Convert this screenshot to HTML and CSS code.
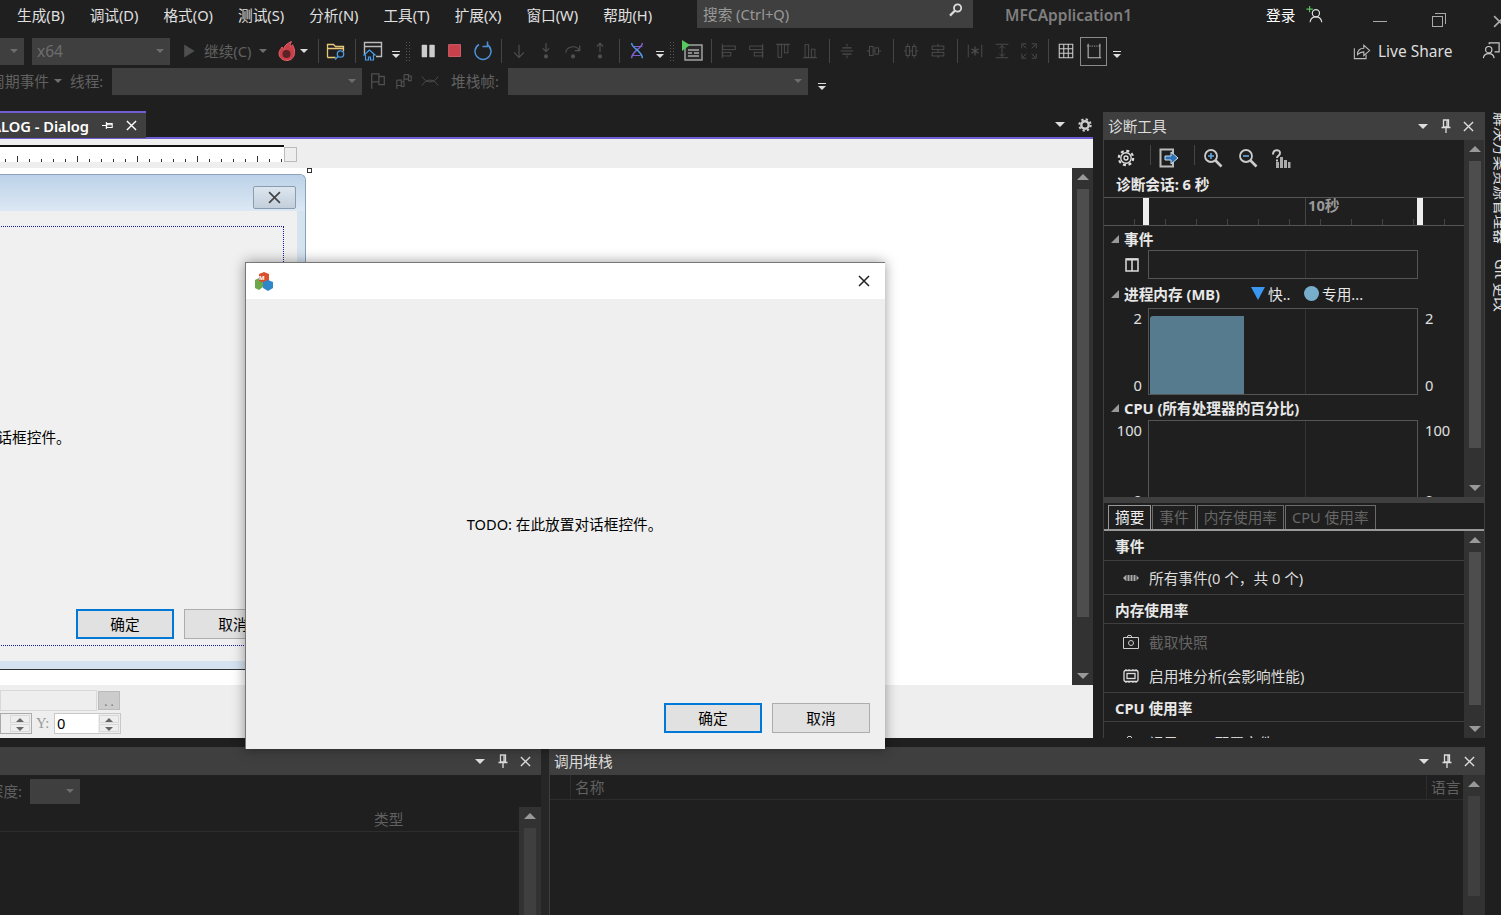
FILE: index.html
```html
<!DOCTYPE html>
<html lang="zh-CN">
<head>
  <meta charset="UTF-8">
  <title>MFCApplication1 - Visual Studio</title>
  <link rel="stylesheet" href="styles.css">
</head>
<body>
  <svg class="defs" aria-hidden="true">
    <symbol id="i-play" viewBox="0 0 20 20"><path d="M4 2l13 8-13 8z" fill="currentColor"/></symbol>
    <symbol id="i-flame" viewBox="0 0 20 20"><path d="M10 19.500c-5 0-8-3.400-8-7 0-3 2-4.500 3-6.500.5 1.200 1 1.800 1.800 2.300C7 5 10 2.500 14.500 .5 13 3 13 4.500 13.500 6c1-.5 1.500-1.200 2-2.300 1.500 3 2.500 5.500 2 8.800-.5 4-3.500 7-7.500 7z" fill="#c8404a" stroke="#e8606a"/><circle cx="9.500" cy="13" r="4" fill="#5c2226"/></symbol>
    <symbol id="i-folder" viewBox="0 0 20 20"><path d="M1.500 16.500v-13h6l2 2h8v5M1.500 16.500h8M1.500 7.500h16" fill="none" stroke="#e8c878" stroke-width="1.300"/><circle cx="14.500" cy="13" r="3.200" fill="#1f1f1f" stroke="#4a9ce8" stroke-width="1.300"/><path d="M12 15.500l-3 3" stroke="#4a9ce8" stroke-width="1.500"/></symbol>
    <symbol id="i-home" viewBox="0 0 20 20"><path d="M1.500 13V1.500h17v14H13M1.500 5.500h17" fill="none" stroke="#bbb" stroke-width="1.400"/><path d="M6.500 9L1 14h1.500v5h3v-3h2v3h3v-5H12z" fill="#1f1f1f" stroke="#4a9ce8" stroke-width="1.200"/></symbol>
    <symbol id="i-pause" viewBox="0 0 20 20"><rect x="3" y="3" width="6" height="14" rx="1" fill="#ccc"/><rect x="11.500" y="3" width="6" height="14" rx="1" fill="#ccc"/></symbol>
    <symbol id="i-stop" viewBox="0 0 20 20"><rect x="3" y="3" width="13" height="13" fill="#c8404a" stroke="#e06570"/></symbol>
    <symbol id="i-restart" viewBox="0 0 20 20"><path d="M7 3.500A8 8 0 1 0 15 3.500" fill="none" stroke="#4a90d8" stroke-width="1.500"/><path d="M15.500 .5v5h-5" fill="none" stroke="#4a90d8" stroke-width="1.500"/></symbol>
    <symbol id="i-down" viewBox="0 0 20 20"><path d="M10 3v14M4.500 11.500L10 17l5.500-5.500" fill="none" stroke="currentColor" stroke-width="1.300"/></symbol>
    <symbol id="i-into" viewBox="0 0 20 20"><path d="M10 1v9M6.500 7L10 10.500 13.500 7" fill="none" stroke="currentColor" stroke-width="1.300"/><circle cx="10" cy="16" r="2.300" fill="currentColor"/></symbol>
    <symbol id="i-over" viewBox="0 0 20 20"><path d="M2 12a8 7 0 0 1 15-3M17.500 4v5.500H12" fill="none" stroke="currentColor" stroke-width="1.300"/><circle cx="10" cy="16" r="2.300" fill="currentColor"/></symbol>
    <symbol id="i-out" viewBox="0 0 20 20"><path d="M10 11V1.500M6.500 5L10 1.500 13.500 5" fill="none" stroke="currentColor" stroke-width="1.300"/><circle cx="10" cy="16" r="2.300" fill="currentColor"/></symbol>
    <symbol id="i-dna" viewBox="0 0 20 20"><path d="M16 1C16 7 4 10 4 18" fill="none" stroke="#8060d0" stroke-width="1.600"/><path d="M4 1c0 6 12 9 12 17" fill="none" stroke="#4a9ce8" stroke-width="1.600"/><path d="M6 5h10M5 15h9" stroke="#8060d0" stroke-width="1.300"/></symbol>
    <symbol id="i-run" viewBox="0 0 22 22"><rect x="4" y="5" width="17" height="15" fill="#2a2a2a" stroke="#aaa" stroke-width="1.400"/><path d="M7 10h11M7 13h4M13 13h5M7 16h11" stroke="#aaa" stroke-width="1.300"/><path d="M1 0l8 5-8 6z" fill="#58c860"/></symbol>
    <symbol id="i-al1" viewBox="0 0 20 20"><path d="M2.500 2v16" stroke="currentColor"/><rect x="3" y="4.500" width="14" height="4" fill="none" stroke="currentColor"/><rect x="3" y="11.500" width="9" height="4" fill="none" stroke="currentColor"/></symbol>
    <symbol id="i-al2" viewBox="0 0 20 20"><path d="M17.500 2v16" stroke="currentColor"/><rect x="3" y="4.500" width="14" height="4" fill="none" stroke="currentColor"/><rect x="8" y="11.500" width="9" height="4" fill="none" stroke="currentColor"/></symbol>
    <symbol id="i-al3" viewBox="0 0 20 20"><path d="M2 2.500h16" stroke="currentColor"/><rect x="4.500" y="3" width="4" height="14" fill="none" stroke="currentColor"/><rect x="11.500" y="3" width="4" height="9" fill="none" stroke="currentColor"/></symbol>
    <symbol id="i-al4" viewBox="0 0 20 20"><path d="M2 17.500h16" stroke="currentColor"/><rect x="4.500" y="3" width="4" height="14" fill="none" stroke="currentColor"/><rect x="11.500" y="8" width="4" height="9" fill="none" stroke="currentColor"/></symbol>
    <symbol id="i-ce1" viewBox="0 0 20 20"><path d="M3 10h14M10 2v3M10 15v3" stroke="currentColor"/><path d="M5 6.500h10M5 13.500h10" stroke="currentColor" stroke-width="1.500"/></symbol>
    <symbol id="i-ce2" viewBox="0 0 20 20"><path d="M2 10h16" stroke="currentColor"/><rect x="5" y="5" width="4" height="10" fill="#1f1f1f" stroke="currentColor"/><rect x="11" y="6.500" width="4" height="7" fill="#1f1f1f" stroke="currentColor"/></symbol>
    <symbol id="i-sp1" viewBox="0 0 20 20"><path d="M6.500 2v16M13.500 2v16M2 10h16" stroke="currentColor"/><rect x="4.500" y="5" width="4" height="10" fill="#1f1f1f" stroke="currentColor"/><rect x="11.500" y="5" width="4" height="10" fill="#1f1f1f" stroke="currentColor"/></symbol>
    <symbol id="i-sp2" viewBox="0 0 20 20"><path d="M10 2v16" stroke="currentColor"/><rect x="3.500" y="4.500" width="13" height="4" fill="#1f1f1f" stroke="currentColor"/><rect x="3.500" y="11.500" width="13" height="4" fill="#1f1f1f" stroke="currentColor"/></symbol>
    <symbol id="i-tab" viewBox="0 0 20 20"><path d="M2.500 3v14M17.500 3v14" stroke="currentColor"/><path d="M10 5v10M6 7.500l8 5M14 7.500l-8 5" stroke="currentColor" stroke-width="1.300"/></symbol>
    <symbol id="i-hei" viewBox="0 0 20 20"><path d="M3 2.500h14M3 17.500h14M10 4v12M7 7l3-3 3 3M7 13l3 3 3-3" fill="none" stroke="currentColor"/></symbol>
    <symbol id="i-siz" viewBox="0 0 20 20"><path d="M2 7V2h5M13 2h5v5M2 13v5h5M18 13v5h-5M3 3l4 4M17 3l-4 4M3 17l4-4M17 17l-4-4" fill="none" stroke="currentColor"/></symbol>
    <symbol id="i-grid" viewBox="0 0 20 20"><path d="M2.500 2.500h15v15h-15zM7.500 2.500v15M12.500 2.500v15M2.500 7.500h15M2.500 12.500h15" fill="none" stroke="#ccc" stroke-width="1.200"/></symbol>
    <symbol id="i-guide" viewBox="0 0 20 20"><path d="M3.500 2v15.500H18M16.500 2v15.500" fill="none" stroke="#bbb" stroke-width="1.200"/><path d="M2 4.500h15" stroke="#bbb" stroke-dasharray="1 1"/></symbol>
    <symbol id="i-flag" viewBox="0 0 20 20"><path d="M3 1.500v17M3 2h8v9H3M11 5h6v9h-6z" fill="none" stroke="currentColor" stroke-width="1.400"/></symbol>
    <symbol id="i-flags" viewBox="0 0 20 20"><path d="M2 9v10M2 9h5v6H2M7 11h3v5H7zM10 3v7M10 3h5v5h-5M15 4.500h3v5h-3z" fill="none" stroke="currentColor" stroke-width="1.300"/></symbol>
    <symbol id="i-thread" viewBox="0 0 20 20"><path d="M1 5c5 8 13 8 18 0M1 15c5-8 13-8 18 0" fill="none" stroke="currentColor"/></symbol>
    <symbol id="i-search" viewBox="0 0 20 20"><circle cx="12" cy="7.500" r="4.500" fill="none" stroke="#ddd" stroke-width="2.200"/><path d="M8.500 11l-6 6" stroke="#ddd" stroke-width="2.800"/></symbol>
    <symbol id="i-user" viewBox="0 0 20 20"><circle cx="11" cy="8" r="4" fill="none" stroke="#ddd" stroke-width="1.300"/><path d="M4.500 18c.5-4 3-6 6.500-6s6 2 6.500 6" fill="none" stroke="#ddd" stroke-width="1.300"/><path d="M4 0v7M.5 3.500h7" stroke="#58c860" stroke-width="1.200"/></symbol>
    <symbol id="i-share" viewBox="0 0 20 20"><path d="M1.500 7v11.500h13V14" fill="none" stroke="#bbb" stroke-width="1.200"/><path d="M5 14c0-5 3-7 7-7V3.500l6.500 6-6.500 5.500v-4c-3 0-5 1-7 3z" fill="none" stroke="#bbb" stroke-width="1.200"/></symbol>
    <symbol id="i-feedback" viewBox="0 0 20 20"><circle cx="7.500" cy="8.500" r="3.500" fill="none" stroke="#ccc" stroke-width="1.300"/><path d="M1.500 18c.5-3.500 3-5 6-5s5.500 1.500 6 5M8 2.500V1h11v10h-5" fill="none" stroke="#ccc" stroke-width="1.300"/></symbol>
    <symbol id="i-pin" viewBox="0 0 12 14"><path d="M3.500 1h5v7h-5zM1.500 8.500h9M6 9v5M7 1.500v6" fill="none" stroke="currentColor" stroke-width="1.300"/></symbol>
    <symbol id="i-pinh" viewBox="0 0 14 12"><path d="M13 3.500v5H6v-5zM5.500 1.500v9M5 6H0M12.500 5H6.500" fill="none" stroke="currentColor" stroke-width="1.300"/></symbol>
    <symbol id="i-x" viewBox="0 0 12 12"><path d="M1 1l10 10M11 1L1 11" stroke="currentColor" stroke-width="1.500"/></symbol>
    <symbol id="i-gear" viewBox="0 0 20 20"><circle cx="10" cy="10" r="5.800" fill="none" stroke="currentColor" stroke-width="1.500"/><circle cx="10" cy="10" r="2.200" fill="none" stroke="currentColor" stroke-width="1.500"/><circle cx="10" cy="10" r="8" fill="none" stroke="currentColor" stroke-width="2.400" stroke-dasharray="3.300 3"/></symbol>
    <symbol id="i-gearf" viewBox="0 0 14 14"><circle cx="7" cy="7" r="3.700" fill="none" stroke="currentColor" stroke-width="2.400"/><circle cx="7" cy="7" r="5.700" fill="none" stroke="currentColor" stroke-width="2" stroke-dasharray="2.300 2.170"/></symbol>
    <symbol id="i-export" viewBox="0 0 20 20"><path d="M14 6V1.500H1.500v17H14V14" fill="none" stroke="#bbb" stroke-width="2"/><path d="M6 8h6V4l7 6-7 6v-4H6z" fill="#2f72b8" stroke="#cfdde8"/></symbol>
    <symbol id="i-zin" viewBox="0 0 20 20"><circle cx="8" cy="8" r="6" fill="#1f1f1f" stroke="#ccc" stroke-width="1.800"/><path d="M5 8h6M8 5v6" stroke="#6aa8e0" stroke-width="1.600"/><path d="M12.500 12.500l6 6" stroke="#ccc" stroke-width="2.600"/></symbol>
    <symbol id="i-zout" viewBox="0 0 20 20"><circle cx="8" cy="8" r="6" fill="#1f1f1f" stroke="#ccc" stroke-width="1.800"/><path d="M5 8h6" stroke="#6aa8e0" stroke-width="1.600"/><path d="M12.500 12.500l6 6" stroke="#ccc" stroke-width="2.600"/></symbol>
    <symbol id="i-chart" viewBox="0 0 20 20"><path d="M2 6.500C2 1 9 1 9 5c0 3-3 2.500-3 5M6 11.500v2" fill="none" stroke="#ccc" stroke-width="2"/><path d="M5 14h3v6H5zM9 9h3v11H9zM13 12h3v8h-3zM17 14h2.500v6H17z" fill="#aaa"/></symbol>
    <symbol id="i-cols" viewBox="0 0 14 14"><path d="M1 1h12v12H1zM7 1v12" fill="none" stroke="#ddd" stroke-width="1.500"/><path d="M1.500 1.500h11" stroke="#ddd" stroke-width="2"/></symbol>
    <symbol id="i-events" viewBox="0 0 16 8"><path d="M0 4l3-3h10l3 3-3 3H3z" fill="#aaa"/><path d="M4 1v6M7 1v6M10 1v6M13 1v6" stroke="#1f1f1f"/></symbol>
    <symbol id="i-camera" viewBox="0 0 16 14"><path d="M.5 2.500h15v11H.5z" fill="none" stroke="#ccc"/><path d="M4 2.500l1-2h3l1 2" fill="none" stroke="#ccc"/><circle cx="8" cy="8" r="2.500" fill="none" stroke="#ccc"/></symbol>
    <symbol id="i-chip" viewBox="0 0 16 14"><rect x="1" y="1.500" width="14" height="11" rx="1.500" fill="none" stroke="#ddd" stroke-width="1.300"/><rect x="4" y="4.500" width="8" height="5" fill="none" stroke="#ddd" stroke-width="1.300"/><path d="M3 0v2M6 0v2M10 0v2M13 0v2M3 12v2M6 12v2M10 12v2M13 12v2" stroke="#ddd"/></symbol>
    <symbol id="i-mfc" viewBox="0 0 20 20"><path d="M1 9l4-2 4 2v7l-4 3-4-2z" fill="#6aa84a"/><path d="M5 3l5-2 5 2v7l-5 2-5-2z" fill="#d8502e"/><path d="M9 11l5-2 5 2v6l-5 3-5-3z" fill="#2f86c8"/></symbol>
  </svg>

  <header class="menubar">
    <nav class="menu">
      <span>生成(B)</span><span>调试(D)</span><span>格式(O)</span><span>测试(S)</span><span>分析(N)</span><span>工具(T)</span><span>扩展(X)</span><span>窗口(W)</span><span>帮助(H)</span>
    </nav>
    <div class="search">
      <span>搜索 (Ctrl+Q)</span>
      <svg class="ic16"><use href="#i-search"/></svg>
    </div>
    <div class="app-name">MFCApplication1</div>
    <div class="login">登录</div>
    <svg class="ic18 login-ic"><use href="#i-user"/></svg>
    <div class="win-btns">
      <span class="win-min"></span>
      <span class="win-max"></span>
      <svg class="win-close"><use href="#i-x"/></svg>
    </div>
  </header>

  <div class="toolbar tb-main">
    <div class="combo combo-a"><i class="caret"></i></div>
    <div class="combo combo-b"><span>x64</span><i class="caret"></i></div>
    <div class="tool off"><svg class="ic16"><use href="#i-play"/></svg></div>
    <span class="tb-label">继续(C)</span>
    <div class="caret-box off-caret"><i class="caret"></i></div>
    <div class="tool"><svg class="ic20"><use href="#i-flame"/></svg></div>
    <div class="caret-box small"><i class="caret light"></i></div>
    <i class="sep"></i>
    <div class="tool"><svg class="ic20"><use href="#i-folder"/></svg></div>
    <i class="sep"></i>
    <div class="tool"><svg class="ic20"><use href="#i-home"/></svg></div>
    <i class="overflow"></i>
    <i class="grip"></i>
    <div class="tool"><svg class="ic18"><use href="#i-pause"/></svg></div>
    <div class="tool"><svg class="ic18"><use href="#i-stop"/></svg></div>
    <div class="tool"><svg class="ic20"><use href="#i-restart"/></svg></div>
    <i class="sep"></i>
    <div class="tool off"><svg class="ic18"><use href="#i-down"/></svg></div>
    <div class="tool off"><svg class="ic18"><use href="#i-into"/></svg></div>
    <div class="tool off"><svg class="ic18"><use href="#i-over"/></svg></div>
    <div class="tool off"><svg class="ic18"><use href="#i-out"/></svg></div>
    <i class="sep"></i>
    <div class="tool"><svg class="ic18"><use href="#i-dna"/></svg></div>
    <i class="overflow"></i>
    <i class="grip"></i>
    <div class="tool"><svg class="ic22"><use href="#i-run"/></svg></div>
    <i class="sep"></i>
    <div class="tool off"><svg class="ic18"><use href="#i-al1"/></svg></div>
    <div class="tool off"><svg class="ic18"><use href="#i-al2"/></svg></div>
    <div class="tool off"><svg class="ic18"><use href="#i-al3"/></svg></div>
    <div class="tool off"><svg class="ic18"><use href="#i-al4"/></svg></div>
    <i class="sep"></i>
    <div class="tool off"><svg class="ic18"><use href="#i-ce1"/></svg></div>
    <div class="tool off"><svg class="ic18"><use href="#i-ce2"/></svg></div>
    <i class="sep"></i>
    <div class="tool off"><svg class="ic18"><use href="#i-sp1"/></svg></div>
    <div class="tool off"><svg class="ic18"><use href="#i-sp2"/></svg></div>
    <i class="sep"></i>
    <div class="tool off"><svg class="ic18"><use href="#i-tab"/></svg></div>
    <div class="tool off"><svg class="ic18"><use href="#i-hei"/></svg></div>
    <div class="tool off"><svg class="ic18"><use href="#i-siz"/></svg></div>
    <i class="sep"></i>
    <div class="tool"><svg class="ic18"><use href="#i-grid"/></svg></div>
    <div class="tool checked"><svg class="ic18"><use href="#i-guide"/></svg></div>
    <i class="overflow"></i>
    <div class="live-share">
      <svg class="ic18"><use href="#i-share"/></svg>
      <span>Live Share</span>
    </div>
    <svg class="ic18 feedback"><use href="#i-feedback"/></svg>
  </div>

  <div class="toolbar tb-debug">
    <span class="tb-label cycle">生命周期事件</span>
    <div class="caret-box off-caret narrow"><i class="caret"></i></div>
    <span class="tb-label thread">线程:</span>
    <div class="combo combo-c"><i class="caret"></i></div>
    <div class="tool-s off"><svg class="ic18"><use href="#i-flag"/></svg></div>
    <div class="tool-s off"><svg class="ic18"><use href="#i-flags"/></svg></div>
    <div class="tool-s off"><svg class="ic18"><use href="#i-thread"/></svg></div>
    <span class="tb-label frame">堆栈帧:</span>
    <div class="combo combo-d"><i class="caret"></i></div>
    <i class="overflow low"></i>
  </div>

  <div class="workspace">
    <div class="main">
      <div class="upper">
        <section class="doc">
          <div class="doc-tabs">
            <div class="doc-tab">
              <span class="doc-tab-title">IDD_MFCAPPLICATION1_DIALOG - Dialog</span>
              <svg class="ic11"><use href="#i-pinh"/></svg>
              <svg class="ic11"><use href="#i-x"/></svg>
            </div>
            <i class="caret white doc-caret"></i>
            <svg class="ic14 doc-gear"><use href="#i-gearf"/></svg>
          </div>
          <div class="doc-view">
            <div class="ruler"><span class="ruler-end"></span></div>
            <div class="canvas-row">
              <div class="canvas">
                <div class="handle"></div>
                <div class="design-dlg">
                  <div class="design-title"><span class="design-close"><svg class="ic11"><use href="#i-x"/></svg></span></div>
                  <div class="design-guides"></div>
                  <span class="design-text">TODO: 在此放置对话框控件。</span>
                  <span class="btn default design-ok">确定</span>
                  <span class="btn design-cancel">取消</span>
                </div>
              </div>
              <div class="vscroll"><i class="up"></i><b class="thumb t-doc"></b><i class="down"></i></div>
            </div>
            <div class="props">
              <div class="prop-row">
                <span class="prop-input"></span>
                <span class="prop-more">. .</span>
              </div>
              <div class="prop-row">
                <span class="spin-box short"><span class="spin"><i></i><i></i></span></span>
                <span class="prop-y">Y:</span>
                <span class="spin-box"><span class="spin-val">0</span><span class="spin"><i></i><i></i></span></span>
              </div>
            </div>
          </div>
        </section>

        <section class="diag">
          <div class="pane-title">
            <span>诊断工具</span>
            <div class="pane-btns">
              <i class="caret white"></i>
              <svg class="ic14"><use href="#i-pin"/></svg>
              <svg class="ic11"><use href="#i-x"/></svg>
            </div>
          </div>
          <div class="diag-top">
            <div class="diag-graphs">
              <div class="diag-tools">
                <svg class="ic18"><use href="#i-gear"/></svg>
                <i class="dsep"></i>
                <svg class="ic20"><use href="#i-export"/></svg>
                <i class="dsep"></i>
                <svg class="ic20"><use href="#i-zin"/></svg>
                <svg class="ic20 zoom-out"><use href="#i-zout"/></svg>
                <svg class="ic20 chart"><use href="#i-chart"/></svg>
              </div>
              <div class="session">诊断会话: 6 秒</div>
              <div class="timeline">
                <i class="mark mark-l"></i>
                <i class="mark mark-r"></i>
                <span class="time-label">10秒</span>
              </div>
              <div class="sec-head"><i class="tri"></i>事件</div>
              <div class="graph graph-events">
                <div class="axis"><svg class="ic14"><use href="#i-cols"/></svg></div>
                <div class="plot"></div>
              </div>
              <div class="sec-head mem-head">
                <i class="tri"></i><span class="mem-name">进程内存 (MB)</span>
                <i class="leg-tri"></i><span class="leg-text">快..</span>
                <i class="leg-dot"></i><span>专用...</span>
              </div>
              <div class="graph graph-mem">
                <div class="axis stack"><span>2</span><span>0</span></div>
                <div class="plot"><div class="mem-area"></div></div>
                <div class="axis stack right"><span>2</span><span>0</span></div>
              </div>
              <div class="sec-head cpu-head"><i class="tri"></i>CPU (所有处理器的百分比)</div>
              <div class="graph graph-cpu">
                <div class="axis stack"><span>100</span><span>0</span></div>
                <div class="plot"></div>
                <div class="axis stack right"><span>100</span><span>0</span></div>
              </div>
            </div>
            <div class="vscroll"><i class="up"></i><b class="thumb t-diag"></b><i class="down"></i></div>
          </div>
          <div class="diag-split"></div>
          <div class="diag-tabs">
            <span class="dtab active">摘要</span><span class="dtab">事件</span><span class="dtab">内存使用率</span><span class="dtab">CPU 使用率</span>
          </div>
          <div class="diag-bottom">
            <div class="summary">
              <div class="sum-head h-events">事件</div>
              <div class="sum-row r-all line"><svg class="sum-ic"><use href="#i-events"/></svg>所有事件(0 个，共 0 个)</div>
              <div class="sum-head h-mem">内存使用率</div>
              <div class="sum-row r-snap muted"><svg class="sum-ic"><use href="#i-camera"/></svg>截取快照</div>
              <div class="sum-row r-heap line"><svg class="sum-ic"><use href="#i-chip"/></svg>启用堆分析(会影响性能)</div>
              <div class="sum-head h-cpu">CPU 使用率</div>
              <div class="sum-row r-rec"><svg class="sum-ic"><use href="#i-camera"/></svg>记录 CPU 配置文件</div>
            </div>
            <div class="vscroll"><i class="up"></i><b class="thumb t-sum"></b><i class="down"></i></div>
          </div>
        </section>
      </div>

      <div class="lower">
        <section class="pane pane-left">
          <div class="pane-title">
            <div class="pane-btns">
              <i class="caret white"></i>
              <svg class="ic14"><use href="#i-pin"/></svg>
              <svg class="ic11"><use href="#i-x"/></svg>
            </div>
          </div>
          <div class="pane-body">
            <div class="pane-list">
              <div class="depth"><span class="depth-label">深度:</span><div class="combo combo-e"><i class="caret"></i></div></div>
              <div class="col-head left-cols"><span>类型</span></div>
            </div>
            <div class="vscroll low-scroll"><i class="up"></i><b class="thumb t-low"></b></div>
          </div>
        </section>
        <div class="split"></div>
        <section class="pane pane-right">
          <div class="pane-title">
            <span>调用堆栈</span>
            <div class="pane-btns">
              <i class="caret white"></i>
              <svg class="ic14"><use href="#i-pin"/></svg>
              <svg class="ic11"><use href="#i-x"/></svg>
            </div>
          </div>
          <div class="pane-body">
            <div class="pane-list">
              <div class="col-head stack-cols"><span class="col-gutter"></span><span class="col-name">名称</span><span class="col-lang">语言</span></div>
            </div>
            <div class="vscroll stack-scroll"><i class="up"></i><b class="thumb t-low"></b></div>
          </div>
        </section>
      </div>
    </div>

    <aside class="side-strip">
      <span>解决方案资源管理器</span>
      <span>Git 更改</span>
    </aside>
  </div>

  <div class="app-dialog">
    <div class="dlg-title">
      <svg class="ic20"><use href="#i-mfc"/><text x="5" y="9" class="mfc-letter">M</text></svg>
      <svg class="dlg-close"><use href="#i-x"/></svg>
    </div>
    <div class="dlg-body">
      <p class="dlg-text">TODO: 在此放置对话框控件。</p>
      <div class="dlg-actions">
        <span class="btn default">确定</span>
        <span class="btn">取消</span>
      </div>
    </div>
  </div>
</body>
</html>
```

FILE: styles.css
```css
* {
  box-sizing: border-box;
}

html, body {
  margin: 0;
  height: 100%;
}

body {
  position: relative;
  width: 1501px;
  height: 915px;
  overflow: hidden;
  background-color: #1f1f1f;
  color: #e0e0e0;
  font-family: "Noto Sans", "Noto Sans CJK SC", sans-serif;
  font-size: 14.67px;
  line-height: 20px;
}

.defs {
  position: absolute;
  width: 0;
  height: 0;
}

svg {
  display: block;
  flex: none;
  overflow: visible;
}

.ic11 { width: 11px; height: 11px; }
.ic14 { width: 14px; height: 14px; }
.ic16 { width: 16px; height: 16px; }
.ic18 { width: 18px; height: 18px; }
.ic20 { width: 20px; height: 20px; }
.ic22 { width: 22px; height: 22px; }

/* menu bar */
.menubar {
  display: flex;
  height: 36px;
  align-items: flex-start;
}

.menu {
  display: flex;
  width: 697px;
  flex: none;
  padding: 5px 0 0 17px;
  gap: 25px;
  color: #e0e0e0;
  white-space: nowrap;
}

.search {
  display: flex;
  width: 276px;
  height: 28px;
  flex: none;
  padding: 4px 9px 0 6px;
  justify-content: space-between;
  background-color: #3f3f3f;
  color: #999;
}

.search svg {
  margin-top: -2px;
}

.app-name {
  width: 261px;
  flex: none;
  margin: 5px 0 0 32px;
  color: #7f7f7f;
  font-size: 15.500px;
  font-weight: 600;
}

.login {
  width: 30px;
  flex: none;
  margin-top: 5px;
  color: #fff;
  white-space: nowrap;
}

.login-ic {
  margin: 6px 0 0 10px;
}

.win-btns {
  display: flex;
  margin: 15px 0 0 49px;
  align-items: center;
}

.win-min {
  width: 14px;
  height: 1px;
  background-color: #aaa;
}

.win-max {
  position: relative;
  width: 11px;
  height: 11px;
  margin-left: 45px;
  border: 1px solid #aaa;
}

.win-max::after {
  content: "";
  position: absolute;
  top: -4px;
  right: -4px;
  width: 10px;
  height: 10px;
  border-top: 1px solid #aaa;
  border-right: 1px solid #aaa;
}

.win-close {
  width: 13px;
  height: 13px;
  margin-left: 50px;
  color: #aaa;
}

/* toolbars */
.toolbar {
  display: flex;
  height: 30px;
  align-items: center;
}

.tb-main > *,
.tb-debug > * {
  flex: none;
}

.combo {
  display: flex;
  height: 27px;
  padding: 0 5px;
  align-items: center;
  justify-content: space-between;
  background-color: #3f3f3f;
  color: #6d6d6d;
  font-size: 15.500px;
}

.combo-a { width: 24px; justify-content: flex-end; }
.combo-b { width: 138px; margin-left: 8px; }
.combo-c { width: 250px; margin-left: 8px; justify-content: flex-end; }
.combo-d { width: 300px; margin-left: 8px; justify-content: flex-end; }
.combo-e { width: 50px; height: 25px; justify-content: flex-end; }

.caret {
  display: block;
  width: 0;
  height: 0;
  margin-right: 1px;
  border-top: 4px solid #6d6d6d;
  border-left: 4px solid transparent;
  border-right: 4px solid transparent;
}

.caret.light { border-top-color: #ddd; }
.caret.white { border-top-color: #ddd; border-top-width: 5px; border-left-width: 5px; border-right-width: 5px; }

.tool,
.tool-s {
  display: flex;
  width: 27px;
  height: 29px;
  align-items: center;
  justify-content: center;
}

.off {
  color: #4f4f4f;
}

.checked {
  margin-left: 1px;
  border: 1px solid #8a8a8a;
}

.combo-b + .tool {
  margin-left: 5px;
}

.tb-label {
  color: #616161;
}

.tb-main .tb-label {
  width: 49px;
  margin-left: 2px;
  white-space: nowrap;
}

.caret-box {
  display: flex;
  width: 20px;
  justify-content: center;
}

.caret-box.small {
  width: 12px;
  justify-content: flex-start;
}

.sep {
  display: block;
  width: 1px;
  height: 24px;
  margin: 0 3px 0 6px;
  background-color: #454545;
}

.overflow {
  position: relative;
  display: block;
  width: 12px;
  height: 10px;
  margin: 10px 0 0 4px;
}

.overflow::before {
  content: "";
  position: absolute;
  top: 0;
  left: 2px;
  width: 8px;
  height: 1px;
  background-color: #ddd;
}

.overflow::after {
  content: "";
  position: absolute;
  top: 3px;
  left: 2px;
  border-top: 4px solid #ddd;
  border-left: 4px solid transparent;
  border-right: 4px solid transparent;
}

.grip {
  display: block;
  width: 6px;
  height: 21px;
  margin: 0 3px;
  background-image: radial-gradient(#555 1px, transparent 1px);
  background-size: 3px 3px;
}

.live-share {
  display: flex;
  margin-left: 230px;
  gap: 7px;
  align-items: center;
  color: #ddd;
  font-size: 15.500px;
}

.feedback {
  margin-left: 30px;
}

.tb-debug {
  margin-bottom: 16px;
}

.cycle {
  width: 49px;
  direction: rtl;
  overflow: hidden;
  white-space: nowrap;
}

.narrow { width: 18px; }
.thread { width: 34px; margin-left: 3px; white-space: nowrap; }
.tb-debug .tool-s { width: 26px; }
.combo-c + .tool-s { margin-left: 3px; }
.frame { width: 49px; margin-left: 8px; white-space: nowrap; }
.low { margin: 14px 0 0 8px; }

/* workspace */
.workspace {
  display: flex;
  height: 803px;
}

.main {
  width: 1485px;
  display: flex;
  flex-direction: column;
}

.upper {
  display: flex;
  height: 626px;
  gap: 10px;
}

.lower {
  display: flex;
  height: 168px;
  margin-top: 9px;
}

/* document well */
.doc {
  display: flex;
  width: 1093px;
  flex-direction: column;
}

.doc-tabs {
  display: flex;
  height: 27px;
  padding-right: 1px;
  align-items: center;
  border-bottom: 2px solid #6f5fd6;
}

.doc-tab {
  display: flex;
  width: 146px;
  height: 27px;
  padding-right: 9px;
  gap: 13px;
  align-items: center;
  justify-content: flex-end;
  border-top: 2px solid #6f5fd6;
  background-color: #3f3f3f;
  color: #fff;
  font-weight: 600;
}

.doc-tab-title {
  white-space: nowrap;
}

.doc-caret {
  margin-left: auto;
}

.doc-gear {
  margin: 0 0 0 12px;
  color: #ccc;
}

.doc-view {
  position: relative;
  display: flex;
  height: 599px;
  padding-top: 29px;
  flex-direction: column;
  background-color: #eee;
}

.ruler {
  position: absolute;
  top: 6px;
  left: 0;
  width: 284px;
  height: 17px;
  border-top: 2px solid #111;
  background-color: #fff;
  background-image:
    repeating-linear-gradient(90deg, transparent 0 17px, #333 17px 18px, transparent 18px 60px),
    repeating-linear-gradient(90deg, transparent 0 5px, #333 5px 6px, transparent 6px 12px);
  background-repeat: no-repeat;
  background-size: 100% 6px, 100% 3px;
  background-position: 0 9px, 0 12px;
}

.ruler-end {
  position: absolute;
  top: 0;
  left: 284px;
  width: 13px;
  height: 15px;
  border: 1px solid #bbb;
  background-color: #eee;
}

.canvas-row {
  display: flex;
  height: 517px;
}

.canvas {
  position: relative;
  flex: 1;
  overflow: hidden;
  background-color: #fff;
}

.handle {
  position: absolute;
  top: 0;
  left: 307px;
  width: 5px;
  height: 5px;
  border: 1px solid #333;
  background-color: #fff;
}

.design-dlg {
  position: absolute;
  top: 6px;
  left: -8px;
  width: 314px;
  height: 496px;
  border: 1px solid #8aa0b8;
  border-bottom: 1px solid #333;
  border-radius: 6px 6px 0 0;
  background-color: #d5e2f0;
}

.design-title {
  height: 36px;
  background: linear-gradient(#bcd2e8, #dce8f4);
  border-radius: 6px 6px 0 0;
}

.design-close {
  position: absolute;
  top: 11px;
  left: 260px;
  display: flex;
  width: 43px;
  height: 23px;
  align-items: center;
  justify-content: center;
  border: 1px solid #8a9cb0;
  border-radius: 2px;
  background: linear-gradient(#dde6ef, #c3cfdc);
  color: #444;
}

.design-close svg {
  width: 13px;
  height: 13px;
}

.design-guides {
  position: absolute;
  top: 36px;
  left: 0;
  right: 8px;
  bottom: 8px;
  background-color: #f0f0f0;
}

.design-guides::after {
  content: "";
  position: absolute;
  top: 15px;
  left: 0;
  right: 13px;
  bottom: 15px;
  border: 1px dotted #1a1aa0;
}

.design-text {
  position: absolute;
  top: 252px;
  left: -118px;
  color: #000;
  white-space: nowrap;
}

.btn {
  display: flex;
  width: 98px;
  height: 30px;
  align-items: center;
  justify-content: center;
  border: 1px solid #adadad;
  background-color: #e1e1e1;
  color: #000;
}

.btn.default {
  border: 2px solid #0078d7;
}

.design-ok {
  position: absolute;
  top: 434px;
  left: 83px;
}

.design-cancel {
  position: absolute;
  top: 434px;
  left: 191px;
}

.vscroll {
  display: flex;
  width: 21px;
  flex: none;
  flex-direction: column;
  align-items: center;
  background-color: #323232;
}

.vscroll .up,
.vscroll .down {
  display: block;
  width: 0;
  height: 0;
  flex: none;
  border-left: 6px solid transparent;
  border-right: 6px solid transparent;
}

.vscroll .up {
  margin-top: 6px;
  border-bottom: 6px solid #999;
}

.vscroll .down {
  margin-top: auto;
  margin-bottom: 6px;
  border-top: 6px solid #999;
}

.thumb {
  display: block;
  width: 12px;
  flex: none;
  background-color: #4d4d4d;
}

.t-doc { height: 428px; margin-top: 9px; }
.t-diag { height: 287px; margin-top: 9px; }
.t-sum { height: 153px; margin-top: 9px; }
.t-low { height: 100px; margin-top: 9px; background-color: #3f3f3f; }

.props {
  height: 53px;
  padding: 4px 0 0;
  color: #999;
}

.prop-row {
  display: flex;
  height: 22px;
  align-items: center;
}

.prop-row + .prop-row {
  margin-top: 1px;
}

.prop-input {
  width: 97px;
  height: 21px;
  border: 1px solid #d8d8d8;
  background-color: #eee;
}

.prop-more {
  width: 22px;
  height: 19px;
  margin-left: 1px;
  border: 1px solid #bbb;
  background-color: #ccc;
  color: #777;
  font-size: 12px;
  line-height: 20px;
  text-align: center;
}

.spin-box {
  position: relative;
  display: flex;
  width: 67px;
  height: 21px;
  border: 1px solid #c8c8c8;
  background-color: #fff;
  color: #000;
}

.spin-box.short {
  width: 32px;
  border-color: #aaa;
  background-color: #eee;
}

.spin-val {
  padding-left: 2px;
  line-height: 19px;
}

.spin {
  display: flex;
  width: 22px;
  margin-left: auto;
  flex-direction: column;
  background-color: #eee;
  gap: 1px;
  padding: 1px;
}

.spin i {
  position: relative;
  flex: 1;
  border: 1px solid #d8d8d8;
}

.spin i::after {
  content: "";
  position: absolute;
  top: 2px;
  left: 5px;
  border-bottom: 4px solid #666;
  border-left: 4px solid transparent;
  border-right: 4px solid transparent;
}

.spin i + i::after {
  border-bottom: 0;
  border-top: 4px solid #666;
}

.prop-y {
  width: 22px;
  padding-left: 4px;
  color: #999;
  font-family: "Liberation Serif", serif;
}

/* diagnostics */
.diag {
  display: flex;
  width: 382px;
  flex-direction: column;
  border-right: 1px solid #3f3f3f;
  border-left: 1px solid #3f3f3f;
}

.pane-title {
  display: flex;
  height: 28px;
  flex: none;
  padding: 0 10px 0 4px;
  align-items: center;
  background-color: #3f3f3f;
  color: #ddd;
}

.pane-btns {
  display: flex;
  margin-left: auto;
  align-items: center;
  gap: 10px;
  color: #ddd;
}

.pane-btns .caret {
  margin-right: 1px;
}

.diag-top {
  display: flex;
  height: 357px;
  flex: none;
  overflow: hidden;
}

.diag-graphs {
  width: 360px;
  flex: none;
}

.diag-tools {
  display: flex;
  height: 34px;
  padding: 1px 0 0 13px;
  align-items: center;
}

.dsep {
  display: block;
  width: 1px;
  height: 20px;
  margin: -6px 8px 0 15px;
  background-color: #454545;
}

.zoom-out { margin-left: 15px; }
.chart { margin-left: 13px; }

.session {
  height: 22px;
  padding-left: 12px;
  color: #e8e8e8;
  font-weight: 700;
}

.timeline {
  position: relative;
  height: 29px;
  margin-top: 1px;
  border-top: 1px solid #555;
  border-bottom: 1px solid #555;
  background-image:
    linear-gradient(#444, #444),
    repeating-linear-gradient(90deg, transparent 0 30px, #444 30px 31px);
  background-repeat: no-repeat;
  background-size: 1px 100%, 100% 6px;
  background-position: 201px 0, 0 bottom;
}

.mark {
  position: absolute;
  top: 0;
  bottom: 0;
  width: 6px;
  background-color: #eee;
}

.mark-l { left: 39px; }
.mark-r { left: 313px; }

.time-label {
  position: absolute;
  top: -3px;
  left: 204px;
  color: #999;
  font-weight: 700;
}

.sec-head {
  display: flex;
  height: 24px;
  padding: 1px 0 0 7px;
  align-items: center;
  color: #e8e8e8;
  font-weight: 700;
}

.tri {
  display: block;
  width: 0;
  height: 0;
  margin-right: 5px;
  border-bottom: 8px solid #999;
  border-left: 8px solid transparent;
}

.graph {
  display: flex;
}

.axis {
  width: 44px;
  flex: none;
}

.graph-events .axis {
  display: flex;
  padding: 0 9px 0 21px;
  align-items: center;
}

.plot {
  position: relative;
  width: 270px;
  flex: none;
  border: 1px solid #555;
  background-image: linear-gradient(#333, #333);
  background-repeat: no-repeat;
  background-size: 1px 100%;
  background-position: 156px 0;
}

.graph-events { height: 29px; }
.graph-mem { height: 87px; }
.graph-cpu { height: 90px; }

.mem-head {
  height: 29px;
  padding-top: 0;
}

.mem-name { width: 127px; }

.leg-tri {
  display: block;
  width: 0;
  height: 0;
  margin-right: 3px;
  border-top: 13px solid #3a96f0;
  border-left: 7px solid transparent;
  border-right: 7px solid transparent;
}

.leg-text {
  width: 36px;
  font-weight: 400;
}

.leg-dot {
  display: block;
  width: 15px;
  height: 15px;
  margin-right: 3px;
  border-radius: 50%;
  background-color: #77aecb;
}

.mem-head span:last-child {
  font-weight: 400;
}

.stack {
  display: flex;
  padding: 0 6px 0 0;
  flex-direction: column;
  justify-content: space-between;
  align-items: flex-end;
}

.stack.right {
  padding: 0 0 0 7px;
  align-items: flex-start;
}

.mem-area {
  position: absolute;
  top: 7px;
  left: 1px;
  width: 94px;
  bottom: 0;
  border-radius: 3px 0 0 0;
  background-color: #567a8e;
}

.cpu-head {
  height: 25px;
  padding-top: 0;
}

.diag-split {
  height: 6px;
  flex: none;
  background-color: #3f3f3f;
}

.diag-tabs {
  display: flex;
  height: 28px;
  flex: none;
  padding: 2px 0 0 4px;
  border-bottom: 2px solid #999;
}

.dtab {
  height: 24px;
  padding: 0 6px;
  border: 1px solid #6a6a6a;
  border-bottom: 0;
  margin-right: 1px;
  color: #666;
  line-height: 23px;
  white-space: nowrap;
}

.dtab.active {
  border-color: #999;
  color: #eee;
}

.diag-bottom {
  display: flex;
  height: 207px;
  flex: none;
  overflow: hidden;
}

.summary {
  width: 360px;
  flex: none;
}

.sum-head {
  padding: 5px 0 0 11px;
  border-bottom: 1px solid #3f3f3f;
  color: #e8e8e8;
  font-weight: 700;
}

.h-events { height: 30px; }
.h-mem { height: 29px; }
.h-cpu { height: 29px; }

.sum-row {
  display: flex;
  padding-left: 19px;
  align-items: center;
  color: #ddd;
  white-space: nowrap;
}

.sum-row.line {
  border-bottom: 1px solid #3f3f3f;
}

.sum-row.muted {
  color: #666;
}

.sum-ic {
  width: 16px;
  height: 14px;
  margin-right: 10px;
}

.r-all { height: 34px; }
.r-all .sum-ic { height: 8px; }
.r-snap { height: 35px; }
.r-heap { height: 34px; }
.r-rec { height: 28px; padding-top: 14px; }

/* lower panes */
.pane {
  display: flex;
  flex-direction: column;
}

.pane-left { width: 541px; }
.pane-right { width: 935px; }

.split {
  width: 9px;
  border-right: 1px solid #3f3f3f;
  background-color: #262626;
}

.pane-body {
  display: flex;
  flex: 1;
  overflow: hidden;
}

.pane-list {
  flex: 1;
}

.depth {
  display: flex;
  height: 31px;
  padding-top: 1px;
  align-items: center;
}

.depth-label {
  display: flex;
  width: 30px;
  padding-right: 8px;
  overflow: hidden;
  justify-content: flex-end;
  color: #616161;
  white-space: nowrap;
}

.col-head {
  display: flex;
  color: #616161;
  border-bottom: 1px solid #2d2d2d;
}

.left-cols {
  height: 26px;
  padding: 3px 0 0 374px;
}

.stack-cols {
  height: 25px;
  padding-top: 2px;
}

.col-gutter {
  width: 21px;
  margin-top: -2px;
  border-right: 1px solid #2d2d2d;
}

.col-name {
  flex: 1;
  padding-left: 4px;
}

.col-lang {
  width: 37px;
  margin-top: -2px;
  padding: 2px 0 0 4px;
  border-left: 1px solid #2d2d2d;
  white-space: nowrap;
}

.low-scroll {
  height: 108px;
  margin-top: 32px;
  width: 22px;
}

.stack-scroll {
  width: 22px;
}

/* right side strip */
.side-strip {
  display: flex;
  width: 16px;
  overflow: hidden;
  gap: 15px;
  color: #ddd;
  writing-mode: vertical-rl;
  text-orientation: sideways;
  line-height: 14px;
}

.side-strip span {
  margin-right: -7px;
  white-space: nowrap;
}

/* the running application's window */
.app-dialog {
  position: absolute;
  top: 262px;
  left: 245px;
  width: 640px;
  height: 487px;
  display: flex;
  flex-direction: column;
  border-top: 1px solid #777;
  border-left: 1px solid #777;
  background-color: #efefef;
  color: #000;
  box-shadow: 0 0 12px rgba(0, 0, 0, 0.4);
}

.dlg-title {
  display: flex;
  height: 36px;
  flex: none;
  padding: 0 15px 0 8px;
  align-items: center;
  justify-content: space-between;
  background-color: #fff;
}

.dlg-close {
  width: 12px;
  height: 12px;
  color: #222;
}

.dlg-body {
  position: relative;
  display: flex;
  flex: 1;
  flex-direction: column;
  align-items: center;
}

.dlg-text {
  margin: 215px 0 0;
  padding-right: 2px;
  white-space: nowrap;
}

.dlg-actions {
  display: flex;
  width: 100%;
  margin-top: auto;
  margin-bottom: 16px;
  padding-right: 15px;
  gap: 10px;
  justify-content: flex-end;
}

.mfc-letter {
  fill: #fff;
  font-size: 6px;
  font-weight: 700;
}
```
